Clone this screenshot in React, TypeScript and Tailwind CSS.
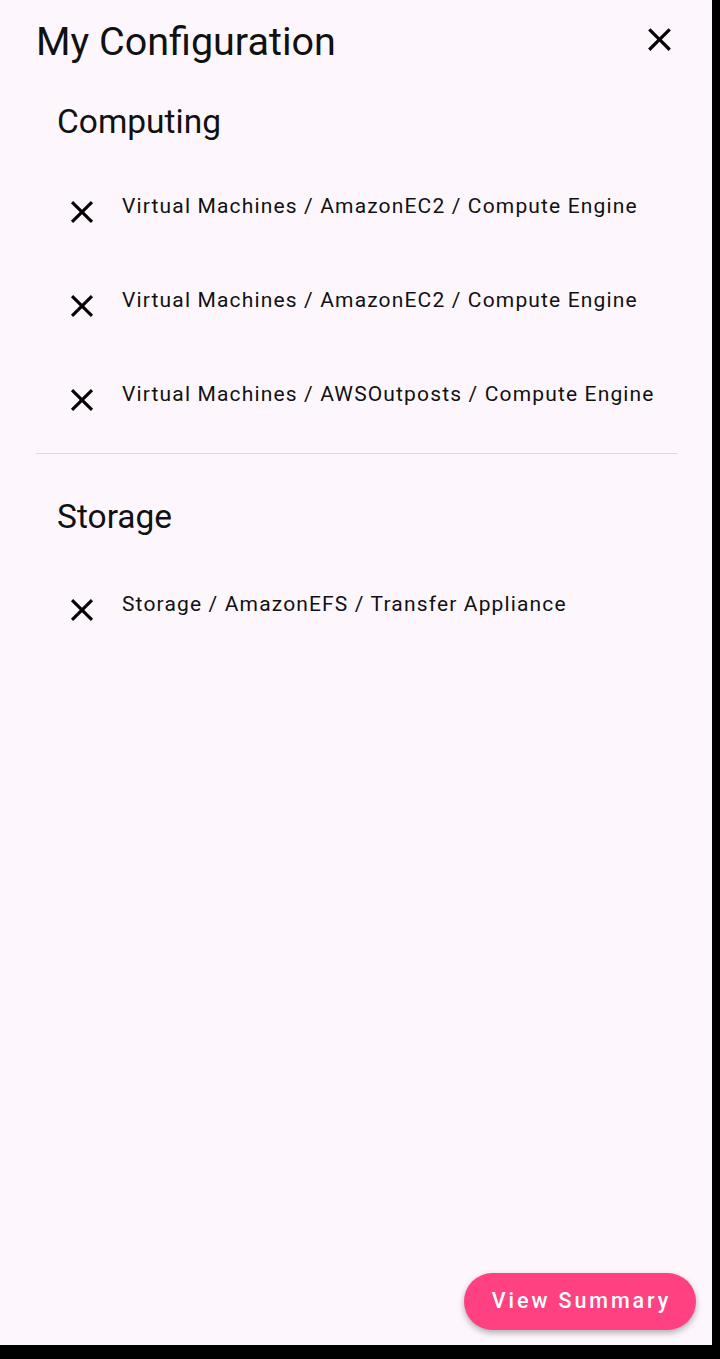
import React from "react";

const CloseIcon = ({ className }: { className?: string }) => (
  <svg viewBox="0 0 24 24" className={className} fill="currentColor">
    <path d="M19 6.41 17.59 5 12 10.59 6.41 5 5 6.41 10.59 12 5 17.59 6.41 19 12 13.41 17.59 19 19 17.59 13.41 12z" />
  </svg>
);

const computing = [
  "Virtual Machines / AmazonEC2 / Compute Engine",
  "Virtual Machines / AmazonEC2 / Compute Engine",
  "Virtual Machines / AWSOutposts / Compute Engine",
];

const storage = ["Storage / AmazonEFS / Transfer Appliance"];

function Item({ label }: { label: string }) {
  return (
    <div className="flex items-start pl-[63px]">
      <button className="mt-[2px] h-[38px] w-[38px] shrink-0 text-black">
        <CloseIcon className="h-[38px] w-[38px]" />
      </button>
      <span className="ml-[21px] mt-[1px] whitespace-nowrap text-[21px] leading-[28px] tracking-[1.15px] text-[#111]">
        {label}
      </span>
    </div>
  );
}

export default function App() {
  return (
    <div className="h-[1359px] w-[720px] bg-black font-['Roboto',sans-serif]">
      <div className="flex h-[1345px] w-[712px] flex-col bg-[#fdf7fd] text-[#111]">
        {/* header */}
        <div className="flex items-start justify-between pl-[36px] pr-[33px] pt-[22px]">
          <h1 className="text-[39.5px] leading-[40px]">My Configuration</h1>
          <button className="mt-[-2.5px] h-[39px] w-[39px] text-black">
            <CloseIcon className="h-[39px] w-[39px]" />
          </button>
        </div>

        {/* computing */}
        <h2 className="mt-[40px] pl-[57px] text-[33.5px] leading-[40px]">Computing</h2>
        <div className="mt-[49px] flex flex-col gap-[54px]">
          {computing.map((c, i) => (
            <Item key={i} label={c} />
          ))}
        </div>

        <div className="ml-[36px] mr-[35px] mt-[34px] h-px bg-[#ddd8dd]" />

        {/* storage */}
        <h2 className="mt-[43px] pl-[57px] text-[33.5px] leading-[40px]">Storage</h2>
        <div className="mt-[52px] flex flex-col gap-[54px]">
          {storage.map((c, i) => (
            <Item key={i} label={c} />
          ))}
        </div>

        <button className="mb-[15px] mr-[16px] mt-auto h-[57px] w-[232px] self-end rounded-full bg-[#ff4081] pl-[3px] text-[21.5px] font-medium tracking-[2.9px] text-white shadow-[0_3px_6px_rgba(0,0,0,0.3)]">
          View Summary
        </button>
      </div>
    </div>
  );
}
